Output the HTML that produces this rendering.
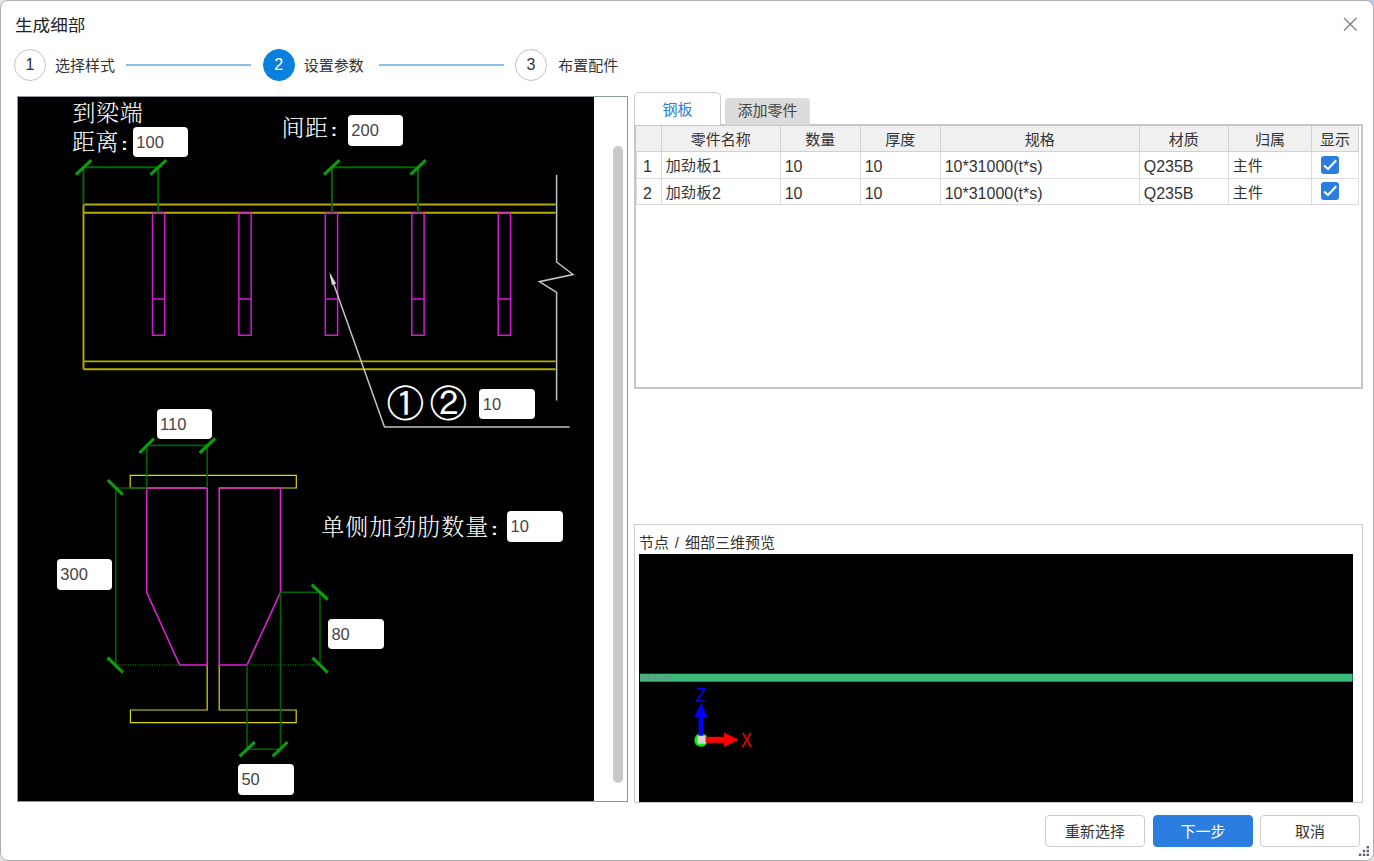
<!DOCTYPE html>
<html lang="zh-CN">
<head>
<meta charset="utf-8">
<title>生成细部</title>
<style>
*{box-sizing:border-box;margin:0;padding:0}
html,body{width:1374px;height:861px;overflow:hidden;background:#e6e6e6}
body{font-family:"Liberation Sans","Noto Sans CJK SC",sans-serif;color:#333;font-size:15px;position:relative}
.abs{position:absolute}
#win{position:absolute;left:0;top:0;width:1374px;height:861px;background:#fff;border-radius:8px;border:1px solid #aeaeae}
.title{left:15px;top:13.6px;font-size:17.6px;line-height:24px;color:#222;letter-spacing:0px;white-space:nowrap;transform:scaleY(.91);transform-origin:0 50%}
  .step{width:32px;height:32px;border-radius:50%;border:1px solid #c4c4c4;top:48.7px;text-align:center;line-height:30px;font-size:16px;color:#333;background:#fff}
.step.on{background:#0b7fdc;border-color:#0b7fdc;color:#fff}
.slabel{top:55.3px;line-height:22px;font-size:15px;color:#333;white-space:nowrap}
.sline{height:2px;background:#8cbeeb;top:64px}
#lp{left:17px;top:96px;width:611px;height:706px;border:1px solid #8e96a0;background:#fff}
#cad{left:18px;top:97px;width:576px;height:704px;background:#000}
#thumb{left:612.8px;top:146px;width:10px;height:637.2px;border-radius:5px;background:#c9c9c9}
.inp{position:absolute;background:#fff;border-radius:4px;height:30.4px;width:55.8px;font-size:16.5px;line-height:30.5px;padding-left:3.6px;color:#444;font-family:"Liberation Sans",sans-serif}
.cadt{position:absolute;color:#fff;font-family:"Liberation Serif","Noto Serif CJK SC",serif;font-size:23px;line-height:24px;white-space:nowrap;letter-spacing:0.6px;font-weight:300}
.L{font-size:16px;letter-spacing:0;position:relative;top:1.3px}
.c.L{font-size:16px;letter-spacing:0;position:absolute;top:auto;padding-top:1.3px}
.col{font-family:"Liberation Sans",sans-serif;font-weight:700;font-size:19px;letter-spacing:0;display:inline-block;transform:scaleY(.86);transform-origin:50% 78%;margin-left:2px}
.tab{position:absolute;font-size:15px;text-align:center;white-space:nowrap}
#tab1{left:634px;top:92px;width:87px;height:32.5px;border:1px solid #c9cdd2;border-bottom:none;border-radius:5px 5px 0 0;background:#fff;color:#2b7de0;line-height:33px}
#tab2{left:725px;top:98px;width:85px;height:27px;border-radius:4px 4px 0 0;background:#dcdcdc;color:#444;line-height:26px}
#tframe{left:634px;top:124px;width:729px;height:265px;border:2px solid #c3c7cc;background:#fff}
.hc{position:absolute;top:126px;height:26px;background:#f0f0f0;border-right:1px solid #d0d0d0;border-bottom:1px solid #d0d0d0;text-align:center;line-height:27px;font-size:15px;color:#333;white-space:nowrap}
.c{position:absolute;height:26.4px;border-right:1px solid #dcdcdc;border-bottom:1px solid #dcdcdc;line-height:25px;font-size:15px;color:#333;padding-left:4px;white-space:nowrap;background:#fff;letter-spacing:.4px}
.cb{position:absolute;width:17.6px;height:17.6px;border-radius:3px;background:#2b7de0}
#gb{left:634px;top:524px;width:729px;height:279px;border:1px solid #c9cdd2;background:#fff}
#gbl{left:639px;top:533px;font-size:15px;word-spacing:1.7px;line-height:20px;color:#333;white-space:nowrap}
#view{left:639px;top:553.6px;width:713.6px;height:248.4px;background:#000}
.btn{position:absolute;top:815px;height:32px;width:100px;border:1px solid #cdcdcd;border-radius:4px;background:#fff;text-align:center;line-height:31.6px;font-size:15px;color:#333}
.btn.pri{background:#2b7de0;border-color:#2b7de0;color:#fff}
</style>
</head>
<body>
<div class="abs" style="right:0;top:0;width:12px;height:12px;background:#b4c9e6"></div>
<div id="win"></div>

<div class="abs title">生成细部</div>
<svg class="abs" style="left:1340px;top:14px" width="20" height="20" viewBox="0 0 20 20"><path d="M4 4 L16.5 16.5 M16.5 4 L4 16.5" stroke="#7f7f7f" stroke-width="1.3" fill="none"/></svg>

<div class="abs step" style="left:14px">1</div>
<div class="abs slabel" style="left:55px">选择样式</div>
<div class="abs sline" style="left:126px;width:125px"></div>
<div class="abs step on" style="left:262.7px">2</div>
<div class="abs slabel" style="left:303.7px">设置参数</div>
<div class="abs sline" style="left:378.5px;width:125px"></div>
<div class="abs step" style="left:515px">3</div>
<div class="abs slabel" style="left:558.3px">布置配件</div>

<div class="abs" id="lp"></div>
<div class="abs" id="cad"></div>
<div class="abs" id="thumb"></div>

<svg class="abs" style="left:0;top:0" width="1374" height="861" viewBox="0 0 1374 861" fill="none" stroke-linecap="butt">
<!-- top beam: yellow -->
<g stroke="#b4ac00" stroke-width="1.9">
<path d="M83.5 204.5 H555.6 M83.5 212.7 H555.6 M83.5 361.4 H555.6 M83.5 369.3 H555.6 M83.5 204.5 V369.3"/>
</g>
<!-- stiffeners magenta -->
<g stroke="#d418d4" stroke-width="1.5">
<path d="M152.5 213 V335.3 H164.7 V213 M152.5 299 H164.7"/>
<path d="M238.9 213 V335.3 H251.1 V213 M238.9 299 H251.1"/>
<path d="M325.3 213 V335.3 H337.6 V213 M325.3 299 H337.6"/>
<path d="M411.8 213 V335.3 H424.1 V213 M411.8 299 H424.1"/>
<path d="M498.2 213 V335.3 H510.5 V213 M498.2 299 H510.5"/>
<path d="M152.5 213 H164.7 M238.9 213 H251.1 M325.3 213 H337.6 M411.8 213 H424.1 M498.2 213 H510.5"/>
</g>
<!-- green dims top -->
<g stroke="#006a00" stroke-width="1.9">
<path d="M83.4 167.2 H158.2 M83.4 167.2 V204.5 M158.2 167.2 V212.7"/>
<path d="M331.9 167.2 H418 M331.9 167.2 V212.7 M418 167.2 V212.7"/>
</g>
<g stroke="#0c9c0c" stroke-width="3.1">
<path d="M75.9 174.6 L91.4 160.1 M150.4 174.6 L166.3 160.1 M324 174.6 L339.5 160.2 M410.5 174.6 L425.7 160.2"/>
</g>
<!-- break line + leader (white/gray) -->
<g stroke="#c4c4c4" stroke-width="1.5">
<path d="M556.6 175 V262 L573 274.5 L539.4 281.7 L556.6 292.3 V400.5"/>
<path d="M330.5 275 L384.5 427 H569.6"/>
</g>
<path d="M329.3 272.2 L336.2 283.5 L331.9 285 Z" fill="#d8d8d8" stroke="none"/>

<!-- lower section -->
<g stroke="#dada00" stroke-width="1.2">
<path d="M207.2 488 H130.2 V475.3 H296.3 V488 H219.2"/>
<path d="M207.2 665 V710 H130.4 V722.6 H296.2 V710 H219.2 V665"/>
</g>
<g stroke="#e020d8" stroke-width="1.6">
<path d="M146.7 488 H207.2 V665 H179.6 L146.7 592.3 Z"/>
<path d="M219.2 488 H280.5 V592.3 L247 665 H219.2 Z"/>
</g>
<g stroke="#006200" stroke-width="1.6">
<path d="M146.7 445.4 H207.2 M146.7 445.4 V488 M207.2 445.4 V488"/>
<path d="M115.8 488 V665 M115.8 488 H146.7"/>
<path d="M115.8 665 H179.6" stroke-dasharray="1.2 1.2"/>
<path d="M280.5 592.3 H320 M320 592.3 V665"/>
<path d="M247 665 H320" stroke-dasharray="1.2 1.2"/>
<path d="M247 665 V749.3 M280.5 592.3 V749.3 M247 749.3 H280.5"/>
</g>
<g stroke="#0c9c0c" stroke-width="3.1">
<path d="M139.5 453 L154 438.5 M199.7 453 L215 438.5"/>
<path d="M107.7 480 L122.8 494.7 M107.6 657.6 L123 672.6"/>
<path d="M311.7 584.7 L327.8 599.5 M312.5 657.6 L327.7 672.6"/>
<path d="M239.6 756.4 L254.8 742 M272.6 756.4 L287.6 742"/>
</g>
</svg>



<div class="cadt" style="left:72.5px;top:102.2px">到梁端</div>
<div class="cadt" style="left:72px;top:130.6px">距离<span class="col">:</span></div>
<div class="cadt" style="left:281.5px;top:116.8px">间距<span class="col">:</span></div>
<div class="cadt" style="left:321.3px;top:515.6px;letter-spacing:1px">单侧加劲肋数量<span class="col">:</span></div>
<div class="cadt" id="circ" style="left:386.8px;top:383.8px;font-size:37.3px;line-height:40px;letter-spacing:5.6px;font-family:'Liberation Sans','IPAGothic','Noto Sans CJK SC',sans-serif;font-weight:400">①②</div>
<div class="inp" style="left:132.7px;top:126.8px">100</div>
<div class="inp" style="left:347.7px;top:115.4px">200</div>
<div class="inp" style="left:479.2px;top:388.9px">10</div>
<div class="inp" style="left:156.5px;top:408.8px">110</div>
<div class="inp" style="left:506.9px;top:511.4px">10</div>
<div class="inp" style="left:56.7px;top:559.3px">300</div>
<div class="inp" style="left:327.8px;top:618.9px">80</div>
<div class="inp" style="left:237.8px;top:764.2px">50</div>



<div class="abs" id="tframe"></div>
<div class="tab" id="tab1">钢板</div>
<div class="tab" id="tab2">添加零件</div>
<div class="hc" style="left:636px;width:25.7px"></div>
<div class="hc" style="left:661.7px;width:119px">零件名称</div>
<div class="hc" style="left:780.7px;width:80px">数量</div>
<div class="hc" style="left:860.7px;width:80px">厚度</div>
<div class="hc" style="left:940.7px;width:199px">规格</div>
<div class="hc" style="left:1139.7px;width:89px">材质</div>
<div class="hc" style="left:1228.7px;width:83.6px">归属</div>
<div class="hc" style="left:1312.3px;width:46.6px">显示</div>
<div class="c L" style="left:636px;top:152px;height:27px;line-height:27.5px;width:25.7px;background:#fff;padding-left:0;text-align:center;border-left:1px solid #dcdcdc;padding-right:3px">1</div>
<div class="c" style="left:661.7px;top:152px;height:27px;line-height:27.5px;width:119px">加劲板<span class="L">1</span></div>
<div class="c L" style="left:780.7px;top:152px;height:27px;line-height:27.5px;width:80px">10</div>
<div class="c L" style="left:860.7px;top:152px;height:27px;line-height:27.5px;width:80px">10</div>
<div class="c L" style="left:940.7px;top:152px;height:27px;line-height:27.5px;width:199px">10*31000(t*s)</div>
<div class="c L" style="left:1139.7px;top:152px;height:27px;line-height:27.5px;width:89px">Q235B</div>
<div class="c" style="left:1228.7px;top:152px;height:27px;line-height:27.5px;width:83.6px">主件</div>
<div class="c" style="left:1312.3px;top:152px;height:27px;line-height:27.5px;width:46.6px"></div>
<div class="cb" style="left:1321.4px;top:156.1px"><svg width="17.6" height="17.6" viewBox="0 0 17.6 17.6" style="display:block"><path d="M3 9.4 L7 13 L15.2 4.2" stroke="#fff" stroke-width="2" fill="none"/></svg></div>
<div class="c L" style="left:636px;top:179px;height:26px;line-height:28px;width:25.7px;background:#fff;padding-left:0;text-align:center;border-left:1px solid #dcdcdc;padding-right:3px">2</div>
<div class="c" style="left:661.7px;top:179px;height:26px;line-height:28px;width:119px">加劲板<span class="L">2</span></div>
<div class="c L" style="left:780.7px;top:179px;height:26px;line-height:28px;width:80px">10</div>
<div class="c L" style="left:860.7px;top:179px;height:26px;line-height:28px;width:80px">10</div>
<div class="c L" style="left:940.7px;top:179px;height:26px;line-height:28px;width:199px">10*31000(t*s)</div>
<div class="c L" style="left:1139.7px;top:179px;height:26px;line-height:28px;width:89px">Q235B</div>
<div class="c" style="left:1228.7px;top:179px;height:26px;line-height:28px;width:83.6px">主件</div>
<div class="c" style="left:1312.3px;top:179px;height:26px;line-height:28px;width:46.6px"></div>
<div class="cb" style="left:1321.4px;top:182.2px"><svg width="17.6" height="17.6" viewBox="0 0 17.6 17.6" style="display:block"><path d="M3 9.4 L7 13 L15.2 4.2" stroke="#fff" stroke-width="2" fill="none"/></svg></div>

<div class="abs" id="gb"></div>
<div class="abs" id="gbl">节点 / 细部三维预览</div>
<div class="abs" id="view"></div>
<svg class="abs" style="left:0;top:0" width="1374" height="861" viewBox="0 0 1374 861">
<rect x="640" y="673.7" width="712.6" height="8" fill="#3dbb7c"/>
<g stroke="#8a7f95" stroke-width="1.2"><path d="M642 675 V680 M645.3 675 V680 M648.6 675 V680 M651.9 675 V680 M655.2 675 V680 M658.5 675 V680 M661.8 675 V680 M665.1 675 V680 M668.4 675 V680 M671.7 675 V680"/></g>
<circle cx="701" cy="740" r="6.7" fill="#00f000"/>
<rect x="698.7" y="716" width="4.6" height="20" fill="#0000ff"/>
<path d="M694.3 717.5 L707.7 717.5 L701 702.5 Z" fill="#0000ff"/>
<rect x="705" y="736.8" width="20" height="6" fill="#ff0000"/>
<path d="M724 732.6 L724 747 L738.8 739.8 Z" fill="#ff0000"/>
<rect x="697.6" y="735.7" width="8" height="8" fill="#d4d4d4"/>
<text x="696" y="702" font-family="Liberation Sans, sans-serif" font-size="20" fill="#0000ff" textLength="10.5" lengthAdjust="spacingAndGlyphs">Z</text>
<text x="741" y="747" font-family="Liberation Sans, sans-serif" font-size="20.5" fill="#ff0000" textLength="11" lengthAdjust="spacingAndGlyphs">X</text>
</svg>


<div class="btn" style="left:1045px">重新选择</div>
<div class="btn pri" style="left:1153px">下一步</div>
<div class="btn" style="left:1260px">取消</div>
<svg class="abs" style="left:0;top:0" width="1374" height="861" viewBox="0 0 1374 861" fill="#5b616d"><rect x="1366.57" y="846.00" width="2.4" height="2.4"/><rect x="1362.78" y="849.80" width="2.4" height="2.4"/><rect x="1366.57" y="849.80" width="2.4" height="2.4"/><rect x="1358.85" y="853.60" width="2.4" height="2.4"/><rect x="1362.78" y="853.60" width="2.4" height="2.4"/><rect x="1366.57" y="853.60" width="2.4" height="2.4"/></svg>
</body>
</html>
